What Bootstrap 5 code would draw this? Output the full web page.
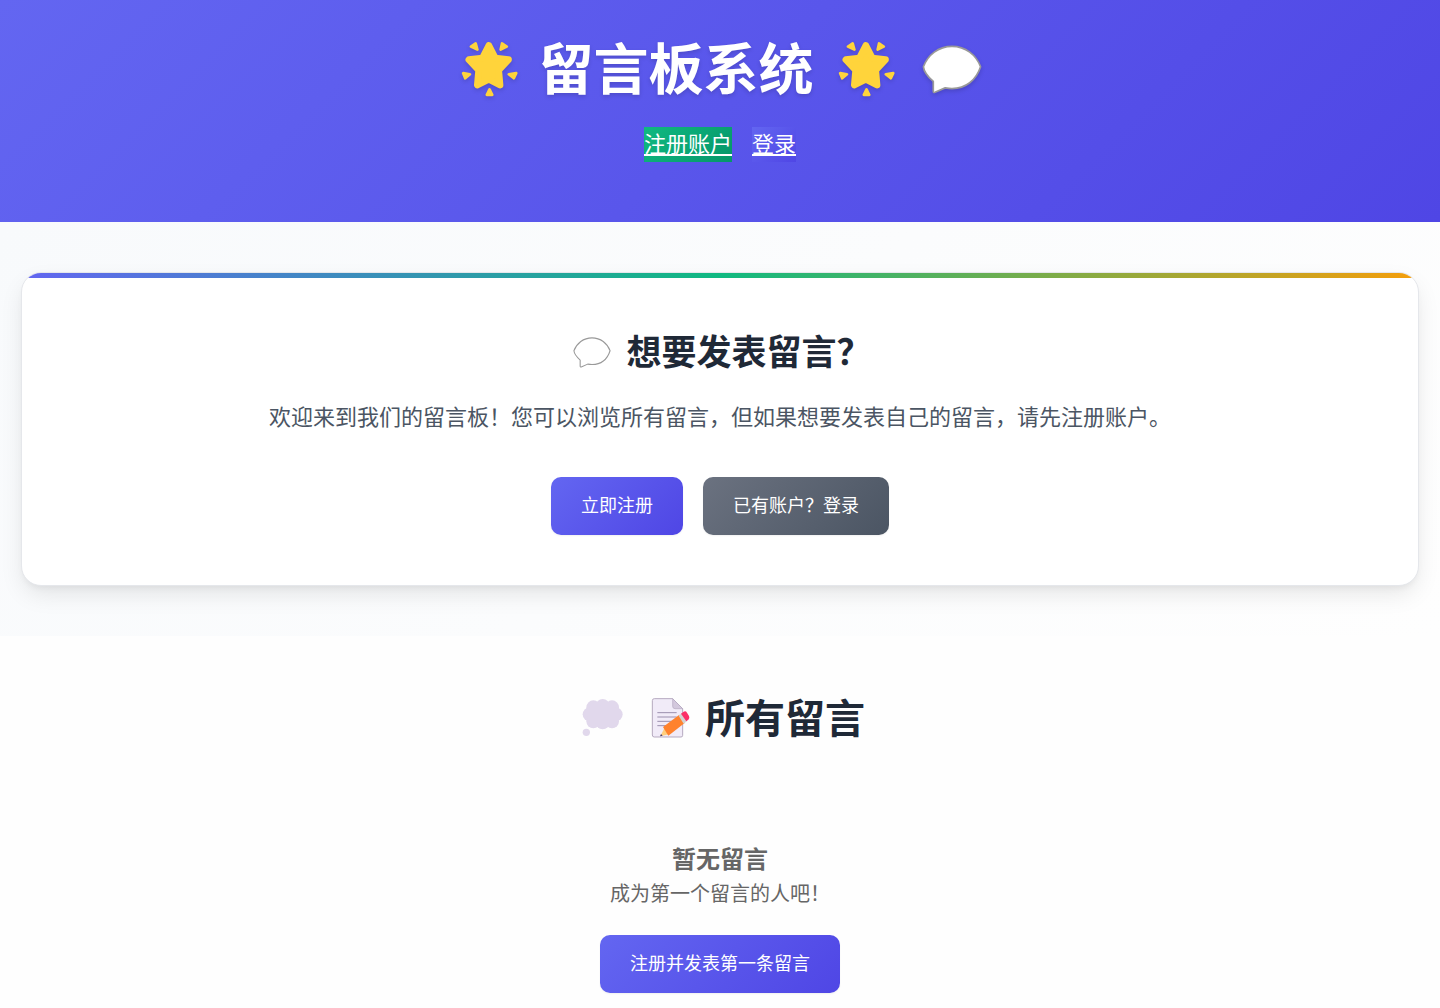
<!DOCTYPE html>
<html lang="zh-CN">
<head>
<meta charset="utf-8">
<meta name="viewport" content="width=device-width, initial-scale=1">
<title>留言板系统</title>
<link rel="stylesheet" href="https://cdn.jsdelivr.net/npm/bootstrap@5.3.0/dist/css/bootstrap.min.css">
<style>
  body { font-family: "Noto Sans CJK SC", sans-serif; background: #fefefe; color: #1f2937; }
  .site-header { background: linear-gradient(135deg, #6366f1, #4f46e5); padding: 30px 20px 60px; }
  .site-title { font-size: 55px; line-height: 70px; margin-bottom: 17px; column-gap: 13px; text-shadow: 0 2px 4px rgba(0,0,0,.15); }
  .site-title span { padding-bottom: 10px; }
  .site-title svg { width: 75px; height: 60px; filter: drop-shadow(0 2px 2px rgba(0,0,0,.15)); }
  .top-nav { gap: 20px; font-size: 22px; line-height: 31px; }
  .top-nav a { color: #fff; padding-bottom: 4px; }
  .nav-green { background: linear-gradient(135deg, #10b981, #059669); }
  .nav-indigo { background: linear-gradient(135deg, #6366f1, #4f46e5); }
  .welcome { background: linear-gradient(135deg, #f8fafc, #fefefe); padding: 50px 21px; }
  .invite { background: #fff; border: 1px solid #e5e7eb; border-radius: 20px; overflow: hidden; box-shadow: 0 10px 25px -3px rgba(0,0,0,.1), 0 4px 6px -2px rgba(0,0,0,.05); }
  .invite::before { content: ""; height: 5px; background: linear-gradient(90deg, #6366f1, #10b981, #f59e0b); }
  .invite-body { padding: 45px 40px 50px; }
  .invite-title { font-size: 35px; line-height: 54px; margin-bottom: 18px; gap: 10px; }
  .invite-title span { padding-bottom: 4px; }
  .invite-title svg { width: 48px; height: 31px; }
  .invite-text { font-size: 22px; line-height: 32px; margin-bottom: 46px; color: #4b5563; }
  .action { --bs-btn-color: #fff; --bs-btn-hover-color: #fff; --bs-btn-active-color: #fff; --bs-btn-font-size: 18px; --bs-btn-border-width: 0; --bs-btn-border-radius: 10px; --bs-btn-line-height: 28px; padding: 13px 30px 17px; box-shadow: 0 1px 2px rgba(0,0,0,.06); }
  .action-main { background: linear-gradient(135deg, #6366f1, #4f46e5); }
  .action-gray { background: linear-gradient(135deg, #6b7280, #4b5563); }
  .actions { gap: 20px; }
  .messages { padding: 50px 20px 14px; }
  .messages-title { font-size: 40px; line-height: 60px; margin-bottom: 92px; column-gap: 13px; }
  .messages-title svg { width: 55px; height: 40px; }
  .memo-label { column-gap: 7px; }
  .memo-label span { padding-bottom: 4px; }
  .empty { color: #666; }
  .empty h3 { font-size: 24px; line-height: 32px; padding-bottom: 3px; }
  .empty p { font-size: 20px; line-height: 32px; margin-bottom: 26px; }
</style>
</head>
<body>
<svg class="d-none" aria-hidden="true">
  <symbol id="star" viewBox="-35 -4 222 177">
    <g fill="#ffd43b" stroke="#ffd43b" stroke-linejoin="round">
      <path stroke-width="20" d="M80 12 99 49 138 54 109 85 113 129 80 112 46 129 50 85 21 54 61 49Z"/>
      <path stroke-width="8" d="M27 15 41 6 46 24ZM119 6 133 15 115 24ZM4 94 24 97 10 109ZM139 97 161 94 154 109ZM82 142 90 158H74Z"/>
    </g>
  </symbol>
  <symbol id="speech" viewBox="-2 -2 176 144">
    <path fill="#fff" stroke="#999" stroke-width="var(--line)" stroke-linejoin="round" d="M31 105C15 91 4 79 2 62 15 27 46 2 86 2S157 27 170 62C157 102 126 126 86 126 78 126 72 125 66 124L36 137Q31 139 31 133Z"/>
  </symbol>
  <symbol id="thought" viewBox="0 0 165 120">
    <g fill="#e1d8ec">
      <circle cx="83" cy="24" r="21"/><circle cx="55" cy="28" r="21"/><circle cx="111" cy="28" r="21"/>
      <circle cx="44" cy="49" r="21"/><circle cx="122" cy="49" r="21"/><circle cx="55" cy="70" r="21"/>
      <circle cx="111" cy="70" r="21"/><circle cx="83" cy="73" r="21"/><path d="M50 25h66v50H50z"/><circle cx="34" cy="103" r="11"/>
    </g>
  </symbol>
  <symbol id="memo" viewBox="0 0 165 120">
    <path fill="#f1ebf8" stroke="#b5a9bf" stroke-width="3" d="M34 2H89L119 32V112Q119 117 114 117H34Q28 117 28 111V8Q28 2 34 2Z"/>
    <path fill="#d3c8dd" stroke="#b5a9bf" stroke-width="2" d="M89 2V25Q89 32 96 32H119Z"/>
    <path stroke="#9b8fae" stroke-width="3" d="M43 44H101M43 57H101M43 70H88M43 83H70"/>
    <path fill="#ffce7c" d="M64 91 52 115 77 109Z"/>
    <path fill="#433b6b" d="M54 108 51 115 59 113Z"/>
    <path fill="#ff822d" d="M60 87 109 50 126 74 76 113Z"/>
    <path fill="#d3d3d3" d="M107 53 116 46 132 69 122 77Z"/>
    <path fill="#fb2f68" d="M114 47 122 41Q128 38 132 44L138 54Q141 60 136 65L130 70Z"/>
  </symbol>
</svg>

<header class="site-header text-center">
  <h1 class="site-title d-flex flex-wrap justify-content-center align-items-center fw-bold text-white">
    <svg aria-hidden="true"><use href="#star"/></svg>
    <span>留言板系统</span>
    <svg aria-hidden="true"><use href="#star"/></svg>
    <svg aria-hidden="true" style="--line:5"><use href="#speech" x="7" y="5" width="60" height="49"/></svg>
  </h1>
  <nav class="top-nav d-flex justify-content-center">
    <a class="nav-green" href="#register">注册账户</a>
    <a class="nav-indigo" href="#login">登录</a>
  </nav>
</header>

<main>
  <section class="welcome">
    <div class="invite d-flex flex-column">
      <div class="invite-body text-center">
        <h2 class="invite-title d-flex justify-content-center align-items-center fw-bold">
          <svg aria-hidden="true" style="--line:5"><use href="#speech"/></svg>
          <span>想要发表留言？</span>
        </h2>
        <p class="invite-text">欢迎来到我们的留言板！您可以浏览所有留言，但如果想要发表自己的留言，请先注册账户。</p>
        <div class="actions d-flex flex-wrap justify-content-center">
          <button type="button" class="btn action action-main">立即注册</button>
          <button type="button" class="btn action action-gray">已有账户？登录</button>
        </div>
      </div>
    </div>
  </section>

  <section class="messages text-center">
    <h2 class="messages-title d-flex justify-content-center align-items-center fw-bold">
      <svg aria-hidden="true"><use href="#thought"/></svg>
      <span class="memo-label d-flex align-items-center"><svg aria-hidden="true"><use href="#memo"/></svg><span>所有留言</span></span>
    </h2>
    <div class="empty">
      <h3 class="fw-bold mb-0">暂无留言</h3>
      <p>成为第一个留言的人吧！</p>
      <button type="button" class="btn action action-main">注册并发表第一条留言</button>
    </div>
  </section>
</main>
<script src="https://cdn.jsdelivr.net/npm/bootstrap@5.3.0/dist/js/bootstrap.bundle.min.js"></script>
</body>
</html>
